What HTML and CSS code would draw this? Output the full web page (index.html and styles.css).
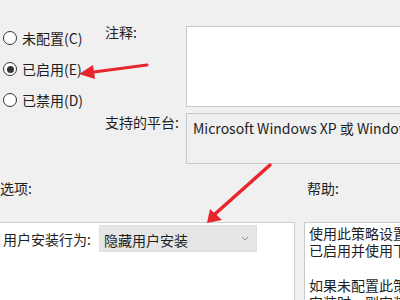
FILE: index.html
```html
<!DOCTYPE html>
<html lang="zh-CN">
<head>
    <meta charset="UTF-8">
    <meta name="viewport" content="width=device-width, initial-scale=1.0">
    <title>阻止用户安装</title>
    <link rel="stylesheet" href="styles.css">
</head>
<body>

    <div class="dialog">
        <div class="top">
            <div class="states">
                <label class="radio"><span class="dot"></span>未配置(C)</label>
                <label class="radio"><span class="dot checked"></span>已启用(E)</label>
                <label class="radio"><span class="dot"></span>已禁用(D)</label>
            </div>

            <div class="fields">
                <div class="label comment-label">注释:</div>
                <div class="box comment"></div>
                <div class="label platform-label">支持的平台:</div>
                <div class="box platform">Microsoft Windows XP 或 Windows Server 2003 家族</div>
            </div>
        </div>

        <div class="bottom">
            <div class="options-col">
                <div class="heading">选项:</div>
                <div class="options">
                    <div class="option-row">
                        <span class="option-label">用户安装行为:</span>
                        <div class="select">
                            <span>隐藏用户安装</span>
                            <svg class="chevron" width="8" height="5" viewBox="0 0 8 5">
                                <polyline points="1,1 4,4 7,1" fill="none" stroke="#8a8a8a" stroke-width="1"/>
                            </svg>
                        </div>
                    </div>
                </div>
            </div>

            <div class="help-col">
                <div class="heading help-heading">帮助:</div>
                <div class="help">
                    <p>使用此策略设置可以配置 Windows Installer 如何处理用户安装。</p>
                    <p>已启用并使用下拉列表中的选项时，可以隐藏用户安装。</p>
                    <p>&nbsp;</p>
                    <p>如果未配置此策略设置，或将其禁用，则用户安装优先。</p>
                    <p>安装时，则安装程序会使用用户安装的产品。</p>
                </div>
            </div>
        </div>

        <!-- 标注箭头 -->
        <svg class="marks" width="400" height="300" viewBox="0 0 400 300">
            <line x1="147" y1="65" x2="90" y2="72.5" stroke="#e8262b" stroke-width="3" stroke-linecap="round"/>
            <polygon points="79,74 93,65 95,79" fill="#e8262b"/>
            <line x1="270" y1="165" x2="215" y2="214" stroke="#e8262b" stroke-width="3.5" stroke-linecap="round"/>
            <polygon points="207,223 210,209 222,220" fill="#e8262b"/>
        </svg>
    </div>

</body>
</html>
```

FILE: styles.css
```css
body {
    margin: 0;
    width: 400px;
    height: 300px;
    overflow: hidden;
    background: #f0f0f0;
    font-family: "Noto Sans CJK SC", "Noto Sans", sans-serif;
    font-size: 14px;
    color: #1e1e1e;
}
.dialog {
    position: relative;
    width: 400px;
    height: 300px;
    overflow: hidden;
}
.top {
    display: flex;
    height: 180px;
}
.states {
    width: 105px;
    padding-top: 28px;
    display: flex;
    flex-direction: column;
    gap: 11px;
}
.radio {
    display: flex;
    align-items: center;
    gap: 5px;
    height: 20px;
    padding-left: 3px;
    line-height: 20px;
}
.dot {
    width: 12px;
    height: 12px;
    border: 1px solid #333;
    border-radius: 50%;
    background: #fff;
    display: flex;
    align-items: center;
    justify-content: center;
}
.dot.checked::after {
    content: "";
    width: 7px;
    height: 7px;
    border-radius: 50%;
    background: #333;
}
.fields {
    flex: 1;
    display: grid;
    grid-template-columns: 81px 1fr;
    grid-template-rows: 81px 51px;
    row-gap: 6px;
    padding-top: 26px;
}
.label {
    line-height: 18px;
}
.comment-label {
    margin-top: -3px;
}
.box {
    border: 1px solid #c9c9c9;
    border-right: none;
    background: #fff;
}
.platform {
    background: #f0f0f0;
    padding: 5px 0 0 6px;
    line-height: 18px;
    white-space: nowrap;
    overflow: hidden;
}
.bottom {
    display: flex;
    gap: 9px;
}
.heading {
    line-height: 16px;
    height: 42px;
}
.options-col {
    width: 295px;
}
.options {
    height: 80px;
    background: #fff;
    border-top: 1px solid #cfcfcf;
    border-right: 1px solid #cfcfcf;
    padding: 2px 0 0 3px;
}
.option-row {
    display: flex;
    align-items: center;
    gap: 8px;
}
.option-label {
    line-height: 24px;
}
.select {
    width: 158px;
    height: 27px;
    background: #e5e5e5;
    border: 1px solid #dedede;
    display: flex;
    align-items: center;
    justify-content: space-between;
    padding: 0 7px 0 4px;
    box-sizing: border-box;
}
.select span {
    margin-top: 2px;
}
.help-col {
    flex: 1;
    min-width: 0;
}
.help-heading {
    padding-left: 3px;
}
.help {
    height: 80px;
    background: #fff;
    border: 1px solid #c9c9c9;
    border-right: none;
    padding: 2px 0 0 4px;
    white-space: nowrap;
    overflow: hidden;
}
.help p {
    margin: 0;
    line-height: 17.3px;
}
.marks {
    position: absolute;
    top: 0;
    left: 0;
    pointer-events: none;
}
```
